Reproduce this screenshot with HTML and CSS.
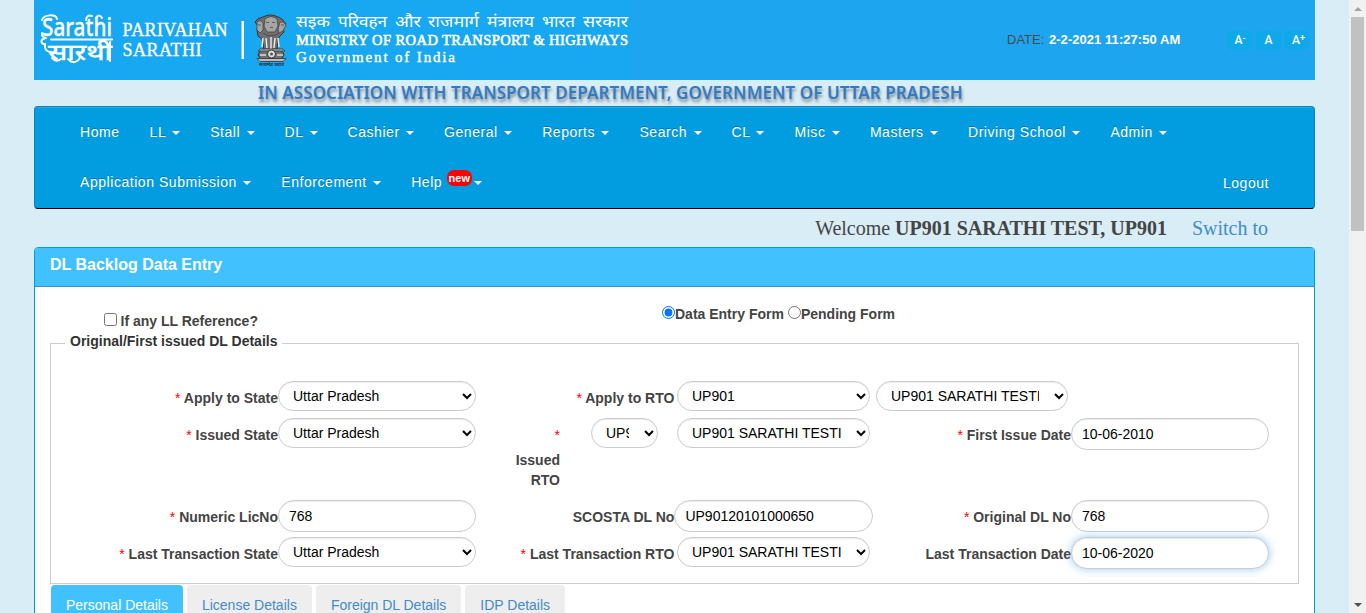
FILE: index.html
```html
<!DOCTYPE html>
<html lang="en">
<head>
<meta charset="utf-8">
<title>DL Backlog Data Entry</title>
<link rel="stylesheet" href="styles.css">
</head>
<body>
<div class="page">
  <header class="banner">
    <svg class="brand" width="599" height="80" viewBox="0 0 599 80">
      <g class="logo">
        <text x="8" y="36" font-size="26" textLength="70" lengthAdjust="spacingAndGlyphs">Sarathi</text>
        <text x="14" y="60" font-size="23" textLength="64" lengthAdjust="spacingAndGlyphs">सारथी</text>
        <path d="M23 19c-1-5-13-5-15 1M8 33q-1 4 4 5M10 39c-4 0-3 6 1 5M11 44q-1 7 5 8M17 39.500h61"/>
        <path d="M52 20q1-6 6-4M62 18q3-5 6 0M18 58q4 5 9 1M44 53q4 5-1 8t-9-2M76 42v19"/>
      </g>
      <g class="brand-name">
        <text x="88.500" y="36" font-size="18" textLength="105">PARIVAHAN</text>
        <text x="88.500" y="56" font-size="18" textLength="79">SARATHI</text>
      </g>
      <rect x="207.500" y="21" width="2.500" height="38" fill="#fff"/>
      <g class="emblem">
        <path fill="#6f6f6f" stroke="#333" d="M229 17q7-4 15 0l4 2 4 5-3 3 1 5-4 4-2 3-1 10q6 1 7 6l-3 5h-20l-3-5q1-5 6-6l-2-10-4-3-1-6 1-4-3-4q2-4 8-5z"/>
        <path fill="#a5a5a5" stroke="#444" stroke-width=".8" d="M231 19q6-5 12 0l1 7-3 6h-8l-3-6zM223 22q4-3 6 1v7l-3 3-3-3zM246 22q4-1 6 3l-3 6-4 2-1-4z"/>
        <path stroke="#444" stroke-width=".8" fill="none" d="M232 22.500h3m3 0h3m-5 5h3M224 25h3m20 0h3M229 33q8 6 16 0"/>
        <path stroke="#eee" stroke-width="1.400" fill="none" d="M229 38l-1 9m4-9 1 10m4-11v12m4-11-1 10m4-10 1 9"/>
        <path fill="#bbb" stroke="#333" stroke-width=".8" d="M226 49h23l2 2H224zM223 58.500h29l-3 3h-23z"/>
        <circle cx="237.500" cy="54" r="4" fill="#ddd" stroke="#333"/>
        <circle cx="237.500" cy="54" r="1.500" fill="#555"/>
        <path stroke="#ddd" stroke-width="1.500" d="M226 55h6m11 0h6"/>
        <text x="225" y="66" font-size="5" textLength="25" lengthAdjust="spacingAndGlyphs">सत्यमेव जयते</text>
      </g>
      <g class="ministry">
        <g class="hindi" font-size="16">
          <text x="262" y="27" textLength="34" lengthAdjust="spacingAndGlyphs">सइक</text>
          <text x="304" y="27" textLength="49" lengthAdjust="spacingAndGlyphs">परिवहन</text>
          <text x="361" y="27" textLength="26" lengthAdjust="spacingAndGlyphs">और</text>
          <text x="394" y="27" textLength="51" lengthAdjust="spacingAndGlyphs">राजमार्ग</text>
          <text x="453" y="27" textLength="47" lengthAdjust="spacingAndGlyphs">मंत्रालय</text>
          <text x="508" y="27" textLength="33" lengthAdjust="spacingAndGlyphs">भारत</text>
          <text x="549" y="27" textLength="45" lengthAdjust="spacingAndGlyphs">सरकार</text>
        </g>
        <text class="semi" x="262" y="45" font-size="14.500" textLength="332">MINISTRY OF ROAD TRANSPORT &amp; HIGHWAYS</text>
        <text class="gov" x="262" y="62" font-size="15" textLength="159">Government of India</text>
      </g>
    </svg>
    <div class="clock"><span>DATE:</span> <b>2-2-2021 11:27:50 AM</b></div>
    <div class="font-size">
      <a>A<sup>-</sup></a><a>A</a><a>A<sup>+</sup></a>
    </div>
  </header>

  <h1 class="association">IN ASSOCIATION WITH TRANSPORT DEPARTMENT, GOVERNMENT OF UTTAR PRADESH</h1>

  <nav class="navbar">
    <div class="nav-row">
      <a>Home</a>
      <a>LL <i class="caret"></i></a>
      <a>Stall <i class="caret"></i></a>
      <a>DL <i class="caret"></i></a>
      <a>Cashier <i class="caret"></i></a>
      <a>General <i class="caret"></i></a>
      <a>Reports <i class="caret"></i></a>
      <a>Search <i class="caret"></i></a>
      <a>CL <i class="caret"></i></a>
      <a>Misc <i class="caret"></i></a>
      <a>Masters <i class="caret"></i></a>
      <a>Driving School <i class="caret"></i></a>
      <a>Admin <i class="caret"></i></a>
    </div>
    <div class="nav-row">
      <a>Application Submission <i class="caret"></i></a>
      <a>Enforcement <i class="caret"></i></a>
      <a>Help <span class="new">new</span><i class="caret"></i></a>
      <a class="logout">Logout</a>
    </div>
  </nav>

  <div class="welcome"><span>Welcome <b>UP901 SARATHI TEST, UP901</b></span><a>Switch to</a></div>

  <main class="panel">
    <h2 class="panel-title">DL Backlog Data Entry</h2>
    <div class="panel-body">
      <div class="modes">
        <label class="ll-ref"><input type="checkbox">If any LL Reference?</label>
        <div class="mode-group">
          <label><input type="radio" name="mode" checked>Data Entry Form</label>
          <label><input type="radio" name="mode">Pending Form</label>
        </div>
      </div>
      <fieldset class="details">
        <legend>Original/First issued DL Details</legend>
        <div class="form-row">
          <label><em>*</em> Apply to State</label>
          <select><option>Uttar Pradesh</option></select>
          <label><em>*</em> Apply to RTO</label>
          <select class="rto"><option>UP901</option></select>
          <select class="rto-name"><option>UP901 SARATHI TESTING</option></select>
        </div>
        <div class="form-row tall">
          <label><em>*</em> Issued State</label>
          <select><option>Uttar Pradesh</option></select>
          <div class="issued">
            <label><em>*</em><span>Issued RTO</span></label>
            <select><option>UP901</option></select>
          </div>
          <select class="rto"><option>UP901 SARATHI TESTING</option></select>
          <label><em>*</em> First Issue Date</label>
          <input type="text" value="10-06-2010">
        </div>
        <div class="form-row">
          <label><em>*</em> Numeric LicNo</label>
          <input type="text" value="768">
          <label>SCOSTA DL No</label>
          <input type="text" value="UP90120101000650">
          <label><em>*</em> Original DL No</label>
          <input type="text" value="768">
        </div>
        <div class="form-row">
          <label><em>*</em> Last Transaction State</label>
          <select><option>Uttar Pradesh</option></select>
          <label><em>*</em> Last Transaction RTO</label>
          <select class="rto"><option>UP901 SARATHI TESTING</option></select>
          <label>Last Transaction Date</label>
          <input class="focused" type="text" value="10-06-2020">
        </div>
      </fieldset>
      <div class="tabs">
        <a class="active">Personal Details</a><a>License Details</a><a>Foreign DL Details</a><a>IDP Details</a>
      </div>
    </div>
  </main>
</div>
<div class="scrollbar">
  <i class="arrow up"></i>
  <i class="thumb"></i>
  <i class="arrow down"></i>
</div>
</body>
</html>
```
FILE: styles.css
```css
* { box-sizing: border-box; }
body {
  margin: 0;
  height: 613px;
  display: flex;
  overflow: hidden;
  background: #d9edf7;
  font: 14px/20px "Liberation Sans", Arial, sans-serif;
  color: #444;
}
.page { width: 1349px; height: 613px; padding: 0 34px; overflow: hidden; }

/* Header */
.banner { height: 80px; display: flex; align-items: center; background: #1ea5f0; }
.brand { flex: none; background: #18a7f1; }
.brand text { fill: #fff; }
.logo text { font-family: "Noto Sans", "Noto Sans Devanagari", sans-serif; font-weight: 500; stroke: #fff; stroke-width: .3; }
.logo path { fill: none; stroke: #fff; stroke-width: 2; stroke-linecap: round; }
.brand-name text, .ministry text { font-family: "Liberation Serif", serif; }
.brand-name text { stroke: #fff; stroke-width: .35; }
.emblem text { fill: #234; font-family: "Noto Sans", sans-serif; font-weight: 700; }
.ministry .hindi text { font-family: "Noto Sans", "Noto Sans Devanagari", sans-serif; }
.ministry .semi, .ministry .gov { stroke: #fff; stroke-width: .4; }
.ministry .semi { stroke-width: .6; }
.clock { margin-left: 374px; width: 220px; font-size: 13px; color: #4a4a4a; white-space: nowrap; }
.clock b { color: #fff; letter-spacing: .05px; margin-left: 1px; }
.font-size { display: flex; gap: 3.5px; }
.font-size a {
  width: 25px; height: 19px; padding-left: 1px; border-radius: 5px; background: #0fa8e9;
  color: #fff; font: 500 12px/19px Roboto, sans-serif; text-align: center;
}
.font-size a:last-child { padding-left: 4px; }
.font-size sup { font-size: 9px; line-height: 0; vertical-align: 3px; }
.association {
  margin: 0; height: 26px; padding-left: 224px; white-space: nowrap;
  font: 600 17px/26px "Noto Sans", sans-serif; color: #337ac4; letter-spacing: .06px;
  text-shadow: 1px 3px 3px rgba(0,0,0,.4);
}

/* Navigation */
.navbar {
  height: 103px; padding: 0 30px; border: 1px solid #0f82bd; border-bottom-color: #000;
  border-radius: 4px; background: #029de0; box-shadow: inset 0 1px 0 #27a9e0;
}
.nav-row { display: flex; height: 50px; }
.nav-row a { padding: 15px; color: #fff; letter-spacing: .55px; white-space: nowrap; text-shadow: 0 -1px 0 rgba(0,0,0,.25); }
.caret {
  display: inline-block; margin-left: 2px; vertical-align: middle;
  border: 4px solid transparent; border-top-color: #fff; border-bottom: 0;
}
.new {
  display: inline-block; height: 16px; padding: 0 2px; border-radius: 7px; background: #f00;
  font: bold 11px/16px "Liberation Sans", sans-serif; letter-spacing: 0; vertical-align: 5px;
  width: 25px; margin-top: -6px; text-align: center; text-shadow: none;
}
.nav-row .logout { margin-left: auto; padding-top: 16px; }

.welcome {
  height: 38px; display: flex; justify-content: flex-end; gap: 25px; padding-right: 47px;
  font: 20px/39px "Liberation Serif", serif;
}
.welcome span { letter-spacing: -.02px; }
.welcome a, .tabs a { color: #428bca; }

/* Panel */
.panel { height: 420px; border: 1px solid #009bde; border-radius: 4px; background: #fff; overflow: hidden; }
.panel-title {
  margin: 0; height: 39px; padding-left: 15px; background: #41c2ff; border-bottom: 1px solid #428bca;
  color: #fff; font: bold 16px/34px "Liberation Sans", sans-serif;
}
.panel-body { padding: 0 15px; }
label { font-weight: bold; }
.modes { display: flex; height: 44px; }
.modes input { margin: 0; width: 13px; height: 13px; }
.modes label { display: flex; }
.ll-ref { width: 558px; padding: 24px 0 0 54px; }
.ll-ref input { margin: 2px 3.5px 0 0; }
.mode-group { display: flex; gap: 4px; padding: 17px 0 0 54px; }
.mode-group input { margin-top: 2px; }
.details {
  margin: 0; padding: 26px 0 0; height: 253px; min-width: 0; border: 1px solid #ccc;
}
.details legend { margin-left: 14px; padding: 0 5px 4px; font-weight: bold; color: #333; height: 24px; }
.form-row { display: grid; grid-template-columns: 227px 198px 198.4px 198.6px 198px 198px; height: 37px; align-items: start; }
.form-row.tall { height: 82px; }
.form-row label { padding-top: 7px; text-align: right; white-space: nowrap; }
em { font-style: normal; font-weight: normal; color: #f00; }
.form-row select, .form-row input {
  width: 100%; border: 1px solid #ccc; border-radius: 16px; background-color: #fff; color: #000;
  box-shadow: inset 0 1px 1px rgba(0,0,0,.075); font: 14px "Liberation Sans", sans-serif;
}
.form-row select { height: 30px; padding: 4px 12px 5px 10px; }
.form-row input { height: 32px; padding: 5px 10px 6px; }
.form-row .rto { width: 193px; margin-left: 2.6px; }
.form-row .rto-name { width: 192px; margin-left: 3px; }
.form-row .focused { box-shadow: inset 0 1px 1px rgba(0,0,0,.075), 0 0 8px rgba(82,168,236,.6); }
.issued { display: flex; gap: 31px; }
.issued label { width: 84px; }
.issued em { display: block; margin-bottom: 5px; }
.issued span { display: block; width: 50px; margin-left: auto; white-space: normal; }
.issued select { width: 67px; }

.tabs { display: flex; gap: 4px; padding: 1px 0 0 1px; }
.tabs a { height: 40px; padding: 10px 15px; border-radius: 4px 4px 0 0; background: #eee; white-space: nowrap; }
.tabs .active { background: #41c2ff; color: #fff; }

/* Window scrollbar */
.scrollbar { width: 17px; display: flex; flex-direction: column; align-items: center; padding: 7px 0 6px; background: #f1f1f1; }
.arrow { border: 4px solid transparent; }
.up { border-top: 0; border-bottom-color: #a3a3a3; }
.thumb { width: 13px; height: 214px; margin-top: 6px; background: #c1c1c1; }
.down { margin-top: auto; border-bottom: 0; border-top-color: #505050; }
```
